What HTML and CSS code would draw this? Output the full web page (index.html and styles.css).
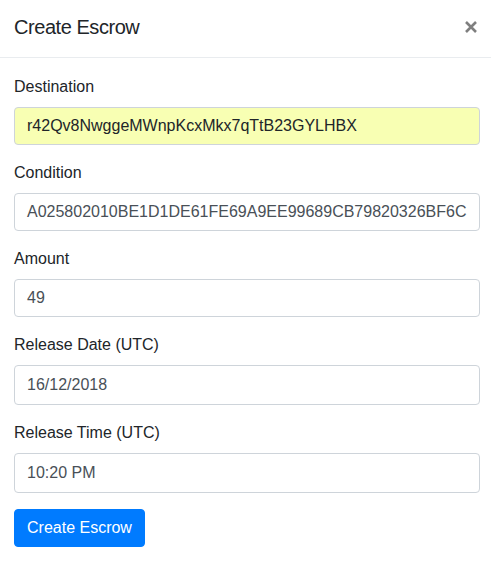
FILE: index.html
```html
<!DOCTYPE html>
<html>
<head>
<meta charset="utf-8">
<link rel="stylesheet" href="styles.css">
</head>
<body>
<div class="modal">
  <div class="modal-header">
    <h5 class="modal-title">Create Escrow</h5>
    <button class="close" type="button" aria-label="Close">
      <svg width="12" height="12" viewBox="0 0 12 12"><path d="M1 1 L11 11 M11 1 L1 11" stroke="#7f7f7f" stroke-width="2.6" stroke-linecap="butt" fill="none"/></svg>
    </button>
  </div>
  <div class="modal-body">
    <div class="form-group">
      <label>Destination</label>
      <div class="form-control autofill">r42Qv8NwggeMWnpKcxMkx7qTtB23GYLHBX</div>
    </div>
    <div class="form-group">
      <label>Condition</label>
      <div class="form-control">A025802010BE1D1DE61FE69A9EE99689CB79820326BF6C</div>
    </div>
    <div class="form-group">
      <label>Amount</label>
      <div class="form-control">49</div>
    </div>
    <div class="form-group">
      <label>Release Date (UTC)</label>
      <div class="form-control tall">16/12/2018</div>
    </div>
    <div class="form-group">
      <label>Release Time (UTC)</label>
      <div class="form-control tall">10:20 PM</div>
    </div>
    <button class="btn" type="button">Create Escrow</button>
  </div>
</div>
</body>
</html>
```

FILE: styles.css
```css
* { box-sizing: border-box; }
html, body {
  margin: 0;
  padding: 0;
  background: #fff;
}
body {
  font-family: "Liberation Sans", Arial, sans-serif;
  font-size: 16px;
  line-height: 1.5;
  color: #212529;
}
.modal {
  width: 491px;
}
.modal-header {
  display: flex;
  justify-content: space-between;
  align-items: flex-start;
  padding: 12px 14px 15px 14px;
  border-bottom: 1px solid #e9ecef;
}
.modal-title {
  margin: 0;
  font-size: 20px;
  font-weight: 400;
  line-height: 30px;
  letter-spacing: -0.45px;
  color: #212529;
}
.close {
  border: 0;
  background: transparent;
  padding: 0;
  margin: 9px 0 0 0;
  width: 12px;
  height: 12px;
  display: flex;
  cursor: pointer;
}
.modal-body {
  padding: 17px 11px 16px 14px;
}
.form-group {
  margin-bottom: 16px;
  display: flex;
  flex-direction: column;
}
label {
  display: block;
  margin-bottom: 8px;
  line-height: 24px;
  color: #212529;
}
.form-control {
  height: 38px;
  padding: 6px 12px;
  border: 1px solid #ced4da;
  border-radius: 4px;
  background: #fff;
  color: #495057;
  line-height: 24px;
  white-space: nowrap;
  overflow: hidden;
}
.form-control.autofill {
  background: #f8ffb3;
  color: #212529;
}
.form-control.tall {
  height: 40px;
  padding-top: 7px;
  padding-bottom: 7px;
}
.btn {
  display: inline-block;
  font-family: inherit;
  font-size: 16px;
  line-height: 24px;
  padding: 6px 12px;
  border: 1px solid #007bff;
  border-radius: 4px;
  background: #007bff;
  color: #fff;
  cursor: pointer;
}
```
